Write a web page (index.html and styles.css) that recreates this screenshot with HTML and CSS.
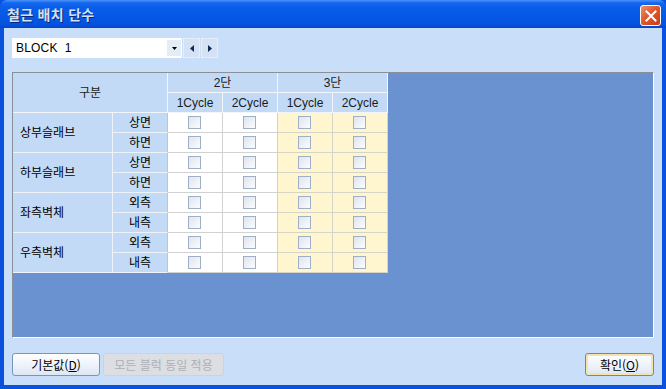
FILE: index.html
```html
<!DOCTYPE html>
<html lang="ko">
<head>
<meta charset="utf-8">
<title>철근 배치 단수</title>
<link rel="stylesheet" href="styles.css">
</head>
<body>
<div class="window">
  <div class="titlebar">
    <span class="title">철근 배치 단수</span>
    <span class="close">
      <svg width="12" height="12" viewBox="0 0 12 12"><path d="M1.5 1.5 L10.5 10.5 M10.5 1.5 L1.5 10.5" stroke="#fff" stroke-width="2" stroke-linecap="square"/></svg>
    </span>
  </div>
  <div class="client">
    <div class="toolbar">
      <div class="combo">
        <span class="combo-text">BLOCK&nbsp;&nbsp;1</span>
        <span class="combo-btn"><svg width="5" height="3" viewBox="0 0 5 3"><path d="M0 0 H5 L2.5 3 Z" fill="#000"/></svg></span>
      </div>
      <span class="nav-btn"><svg width="4" height="7" viewBox="0 0 4 7"><path d="M4 0 V7 L0 3.5 Z" fill="#0c2a5c"/></svg></span>
      <span class="nav-btn"><svg width="4" height="7" viewBox="0 0 4 7"><path d="M0 0 V7 L4 3.5 Z" fill="#0c2a5c"/></svg></span>
    </div>
    <div class="gridbox">
      <div class="sheet">
        <div class="cell head gu">구분</div>
        <div class="cell head dan2">2단</div>
        <div class="cell head dan3">3단</div>
        <div class="cell head">1Cycle</div>
        <div class="cell head">2Cycle</div>
        <div class="cell head">1Cycle</div>
        <div class="cell head">2Cycle</div>

        <div class="cell group g1">상부슬래브</div>
        <div class="cell sub s3">상면</div>
        <div class="cell w"><span class="chk"></span></div><div class="cell w"><span class="chk"></span></div><div class="cell y"><span class="chk"></span></div><div class="cell y"><span class="chk"></span></div>
        <div class="cell sub s4">하면</div>
        <div class="cell w"><span class="chk"></span></div><div class="cell w"><span class="chk"></span></div><div class="cell y"><span class="chk"></span></div><div class="cell y"><span class="chk"></span></div>

        <div class="cell group g2">하부슬래브</div>
        <div class="cell sub s5">상면</div>
        <div class="cell w"><span class="chk"></span></div><div class="cell w"><span class="chk"></span></div><div class="cell y"><span class="chk"></span></div><div class="cell y"><span class="chk"></span></div>
        <div class="cell sub s6">하면</div>
        <div class="cell w"><span class="chk"></span></div><div class="cell w"><span class="chk"></span></div><div class="cell y"><span class="chk"></span></div><div class="cell y"><span class="chk"></span></div>

        <div class="cell group g3">좌측벽체</div>
        <div class="cell sub s7">외측</div>
        <div class="cell w"><span class="chk"></span></div><div class="cell w"><span class="chk"></span></div><div class="cell y"><span class="chk"></span></div><div class="cell y"><span class="chk"></span></div>
        <div class="cell sub s8">내측</div>
        <div class="cell w"><span class="chk"></span></div><div class="cell w"><span class="chk"></span></div><div class="cell y"><span class="chk"></span></div><div class="cell y"><span class="chk"></span></div>

        <div class="cell group g4">우측벽체</div>
        <div class="cell sub s9">외측</div>
        <div class="cell w"><span class="chk"></span></div><div class="cell w"><span class="chk"></span></div><div class="cell y"><span class="chk"></span></div><div class="cell y"><span class="chk"></span></div>
        <div class="cell sub s10">내측</div>
        <div class="cell w"><span class="chk"></span></div><div class="cell w"><span class="chk"></span></div><div class="cell y"><span class="chk"></span></div><div class="cell y"><span class="chk"></span></div>
      </div>
    </div>
    <div class="buttons">
      <span class="btn btn-default-val">기본값(<u>D</u>)</span>
      <span class="btn btn-disabled">모든 블럭 동일 적용</span>
      <span class="spacer"></span>
      <span class="btn btn-ok">확인(<u>O</u>)</span>
    </div>
  </div>
</div>
</body>
</html>
```

FILE: styles.css
```css
* { box-sizing: border-box; }
html, body { margin: 0; padding: 0; }
body {
  width: 666px;
  height: 389px;
  overflow: hidden;
  font-family: "Liberation Sans", "Noto Sans CJK KR", sans-serif;
  font-size: 12px;
  color: #000;
}
.window {
  width: 666px;
  height: 389px;
  display: flex;
  flex-direction: column;
  background: #0a52de;
}
.titlebar {
  height: 28px;
  flex: none;
  display: flex;
  align-items: center;
  padding: 0 5px 0 7px;
  background: linear-gradient(#4a93fa 0, #1466ee 3px, #0a5de8 8px, #0558e6 60%, #0451dd 88%, #0746c8 100%);
  border-radius: 7px 7px 0 0;
}
.title {
  flex: 1;
  font-family: "Noto Sans CJK KR", sans-serif;
  font-weight: bold;
  font-size: 14px;
  color: #d5e0f4;
  text-shadow: 1px 1px 0 #0b2579;
  letter-spacing: 0.3px;
  line-height: 20px;
}
.close {
  width: 21px;
  height: 21px;
  margin-top: 3px;
  display: flex;
  align-items: center;
  justify-content: center;
  border: 1px solid #fff;
  border-radius: 3px;
  background: linear-gradient(135deg, #f0906c 0, #e0582e 45%, #c83c14 100%);
}
.client {
  flex: 1;
  margin: 0 4px 4px 4px;
  background: #c9def8;
  display: flex;
  flex-direction: column;
  padding: 10px 8px 9px 8px;
}
.toolbar {
  height: 20px;
  display: flex;
  align-items: stretch;
  gap: 1px;
}
.combo {
  width: 170px;
  background: #fff;
  display: flex;
  align-items: center;
}
.combo-text {
  flex: 1;
  padding-left: 4px;
  font-size: 12px;
  letter-spacing: 0.2px;
}
.combo-btn {
  width: 14px;
  align-self: stretch;
  margin: 2px 1px 2px 0;
  background: #e4ecf7;
  display: flex;
  align-items: center;
  justify-content: center;
}
.nav-btn {
  width: 17px;
  background: #d4e2f4;
  border: 1px solid #e6eefa;
  display: flex;
  align-items: center;
  justify-content: center;
}
.gridbox {
  flex: 1;
  margin-top: 14px;
  background: #6a92d0;
  border: 1px solid;
  border-color: #8a8f98 #ffffff #ffffff #8a8f98;
}
.sheet {
  display: grid;
  grid-template-columns: 100px 55px 55px 55px 55px 55px;
  grid-template-rows: repeat(10, 20px);
  width: 375px;
}
.cell {
  display: flex;
  align-items: center;
  justify-content: center;
  border-right: 1px solid #c9c9c9;
  border-bottom: 1px solid #c9c9c9;
  font-family: "Liberation Sans", "Noto Sans CJK KR", sans-serif;
  font-size: 12px;
  line-height: 14px;
}
.head {
  background: #c3daf6;
  border-right-color: #f2f6fb;
  border-bottom-color: #f2f6fb;
  color: #1a1a1a;
}
.gu { grid-column: 1 / 3; grid-row: 1 / 3; }
.dan2 { grid-column: 3 / 5; grid-row: 1; }
.dan3 { grid-column: 5 / 7; grid-row: 1; }
.group {
  grid-column: 1;
  justify-content: flex-start;
  padding-left: 7px;
  background: #c3daf6;
  border-right-color: #eef3f9;
  border-bottom-color: #eef3f9;
}
.g1 { grid-row: 3 / 5; }
.g2 { grid-row: 5 / 7; }
.g3 { grid-row: 7 / 9; }
.g4 { grid-row: 9 / 11; }
.sub {
  grid-column: 2;
  background: #c3daf6;
  border-right: 1px solid #a8c9f2;
  border-bottom-color: #eef3f9;
}
.s3 { grid-row: 3; } .s4 { grid-row: 4; } .s5 { grid-row: 5; } .s6 { grid-row: 6; }
.s7 { grid-row: 7; } .s8 { grid-row: 8; } .s9 { grid-row: 9; } .s10 { grid-row: 10; }
.w { background: #ffffff; border-color: #d2d2d2; }
.y { background: #fff6cf; border-color: #d6d4c4; }
.chk {
  width: 13px;
  height: 13px;
  margin-left: -1px;
  border: 1px solid #9fb0c6;
  background: linear-gradient(135deg, #dfe5ee 0, #eef2f7 55%, #fbfcfe 100%);
}
.buttons {
  margin-top: 15px;
  height: 23px;
  display: flex;
  gap: 3px;
}
.spacer { flex: 1; }
.btn {
  display: flex;
  align-items: center;
  justify-content: center;
  border-radius: 3px;
  border: 1px solid #7b94bb;
  background: linear-gradient(#fdfeff 0, #f0f5fb 45%, #dce7f3 100%);
  font-family: "Noto Sans CJK KR", sans-serif;
  font-size: 12px;
  color: #000;
}
.btn u { text-underline-offset: 1px; }
.btn-default-val { width: 88px; }
.btn-disabled {
  width: 121px;
  border-color: #cfd3d8;
  background: #dcdee2;
  color: #acb0b6;
}
.btn-ok {
  width: 69px;
  border-color: #6e86ac;
  box-shadow: inset 0 0 0 2px #f6e3a6;
}
```
